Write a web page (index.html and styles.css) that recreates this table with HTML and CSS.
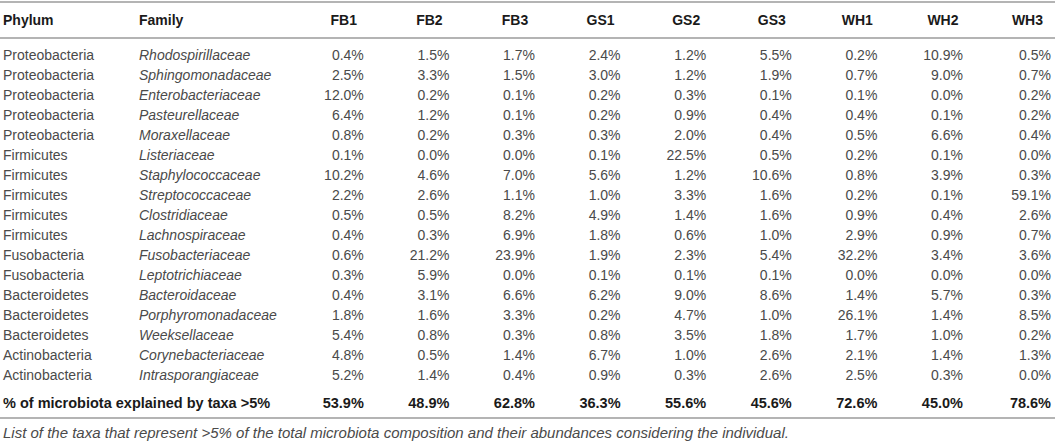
FILE: index.html
```html
<!DOCTYPE html>
<html lang="en">
<head>
    <meta charset="UTF-8">
    <meta name="viewport" content="width=device-width, initial-scale=1.0">
    <title>Taxa abundance</title>
    <link rel="stylesheet" href="styles.css">
</head>
<body>
    <table class="taxa">
        <colgroup>
            <col class="col-phylum">
            <col class="col-family">
            <col class="col-num"><col class="col-num"><col class="col-num">
            <col class="col-num"><col class="col-num"><col class="col-num">
            <col class="col-num"><col class="col-num">
            <col class="col-last">
        </colgroup>
        <thead>
            <tr>
                <th class="text">Phylum</th>
                <th class="text">Family</th>
                <th>FB1</th><th>FB2</th><th>FB3</th>
                <th>GS1</th><th>GS2</th><th>GS3</th>
                <th>WH1</th><th>WH2</th><th class="last">WH3</th>
            </tr>
        </thead>
        <tbody>
            <tr><td class="text">Proteobacteria</td><td class="text fam">Rhodospirillaceae</td><td>0.4%</td><td>1.5%</td><td>1.7%</td><td>2.4%</td><td>1.2%</td><td>5.5%</td><td>0.2%</td><td>10.9%</td><td class="last">0.5%</td></tr>
            <tr><td class="text">Proteobacteria</td><td class="text fam">Sphingomonadaceae</td><td>2.5%</td><td>3.3%</td><td>1.5%</td><td>3.0%</td><td>1.2%</td><td>1.9%</td><td>0.7%</td><td>9.0%</td><td class="last">0.7%</td></tr>
            <tr><td class="text">Proteobacteria</td><td class="text fam">Enterobacteriaceae</td><td>12.0%</td><td>0.2%</td><td>0.1%</td><td>0.2%</td><td>0.3%</td><td>0.1%</td><td>0.1%</td><td>0.0%</td><td class="last">0.2%</td></tr>
            <tr><td class="text">Proteobacteria</td><td class="text fam">Pasteurellaceae</td><td>6.4%</td><td>1.2%</td><td>0.1%</td><td>0.2%</td><td>0.9%</td><td>0.4%</td><td>0.4%</td><td>0.1%</td><td class="last">0.2%</td></tr>
            <tr><td class="text">Proteobacteria</td><td class="text fam">Moraxellaceae</td><td>0.8%</td><td>0.2%</td><td>0.3%</td><td>0.3%</td><td>2.0%</td><td>0.4%</td><td>0.5%</td><td>6.6%</td><td class="last">0.4%</td></tr>
            <tr><td class="text">Firmicutes</td><td class="text fam">Listeriaceae</td><td>0.1%</td><td>0.0%</td><td>0.0%</td><td>0.1%</td><td>22.5%</td><td>0.5%</td><td>0.2%</td><td>0.1%</td><td class="last">0.0%</td></tr>
            <tr><td class="text">Firmicutes</td><td class="text fam">Staphylococcaceae</td><td>10.2%</td><td>4.6%</td><td>7.0%</td><td>5.6%</td><td>1.2%</td><td>10.6%</td><td>0.8%</td><td>3.9%</td><td class="last">0.3%</td></tr>
            <tr><td class="text">Firmicutes</td><td class="text fam">Streptococcaceae</td><td>2.2%</td><td>2.6%</td><td>1.1%</td><td>1.0%</td><td>3.3%</td><td>1.6%</td><td>0.2%</td><td>0.1%</td><td class="last">59.1%</td></tr>
            <tr><td class="text">Firmicutes</td><td class="text fam">Clostridiaceae</td><td>0.5%</td><td>0.5%</td><td>8.2%</td><td>4.9%</td><td>1.4%</td><td>1.6%</td><td>0.9%</td><td>0.4%</td><td class="last">2.6%</td></tr>
            <tr><td class="text">Firmicutes</td><td class="text fam">Lachnospiraceae</td><td>0.4%</td><td>0.3%</td><td>6.9%</td><td>1.8%</td><td>0.6%</td><td>1.0%</td><td>2.9%</td><td>0.9%</td><td class="last">0.7%</td></tr>
            <tr><td class="text">Fusobacteria</td><td class="text fam">Fusobacteriaceae</td><td>0.6%</td><td>21.2%</td><td>23.9%</td><td>1.9%</td><td>2.3%</td><td>5.4%</td><td>32.2%</td><td>3.4%</td><td class="last">3.6%</td></tr>
            <tr><td class="text">Fusobacteria</td><td class="text fam">Leptotrichiaceae</td><td>0.3%</td><td>5.9%</td><td>0.0%</td><td>0.1%</td><td>0.1%</td><td>0.1%</td><td>0.0%</td><td>0.0%</td><td class="last">0.0%</td></tr>
            <tr><td class="text">Bacteroidetes</td><td class="text fam">Bacteroidaceae</td><td>0.4%</td><td>3.1%</td><td>6.6%</td><td>6.2%</td><td>9.0%</td><td>8.6%</td><td>1.4%</td><td>5.7%</td><td class="last">0.3%</td></tr>
            <tr><td class="text">Bacteroidetes</td><td class="text fam">Porphyromonadaceae</td><td>1.8%</td><td>1.6%</td><td>3.3%</td><td>0.2%</td><td>4.7%</td><td>1.0%</td><td>26.1%</td><td>1.4%</td><td class="last">8.5%</td></tr>
            <tr><td class="text">Bacteroidetes</td><td class="text fam">Weeksellaceae</td><td>5.4%</td><td>0.8%</td><td>0.3%</td><td>0.8%</td><td>3.5%</td><td>1.8%</td><td>1.7%</td><td>1.0%</td><td class="last">0.2%</td></tr>
            <tr><td class="text">Actinobacteria</td><td class="text fam">Corynebacteriaceae</td><td>4.8%</td><td>0.5%</td><td>1.4%</td><td>6.7%</td><td>1.0%</td><td>2.6%</td><td>2.1%</td><td>1.4%</td><td class="last">1.3%</td></tr>
            <tr><td class="text">Actinobacteria</td><td class="text fam">Intrasporangiaceae</td><td>5.2%</td><td>1.4%</td><td>0.4%</td><td>0.9%</td><td>0.3%</td><td>2.6%</td><td>2.5%</td><td>0.3%</td><td class="last">0.0%</td></tr>
        </tbody>
        <tfoot>
            <tr>
                <td class="text" colspan="2">% of microbiota explained by taxa &gt;5%</td>
                <td>53.9%</td><td>48.9%</td><td>62.8%</td><td>36.3%</td><td>55.6%</td><td>45.6%</td><td>72.6%</td><td>45.0%</td><td class="last">78.6%</td>
            </tr>
        </tfoot>
    </table>
    <p class="caption">List of the taxa that represent &gt;5% of the total microbiota composition and their abundances considering the individual.</p>
</body>
</html>
```

FILE: styles.css
```css
body {
    margin: 0;
    background: #fff;
    color: #4a4a4a;
    font-family: "Liberation Sans", Arial, sans-serif;
    font-size: 14px;
}
.taxa {
    width: 1055px;
    margin-top: 1px;
    border-collapse: collapse;
    table-layout: fixed;
}
.col-phylum { width: 136px; }
.col-family { width: 165px; }
.col-num { width: 85.6px; }
.col-last { width: 69.2px; }
th, td {
    padding: 0;
    line-height: 20px;
    white-space: nowrap;
}
th {
    padding: 7px 0 7px;
    text-align: center;
    font-weight: bold;
    color: #1a1a1a;
    border-top: 2px solid #b4b4b4;
    border-bottom: 2px solid #b4b4b4;
}
td {
    text-align: right;
    padding-right: 22.8px;
}
th.text, td.text {
    text-align: left;
    padding-left: 3px;
    padding-right: 0;
}
th.last {
    text-align: right;
    padding-right: 12px;
}
td.last {
    padding-right: 4px;
}
.fam {
    font-style: italic;
}
tbody tr:first-child td {
    padding-top: 6px;
}
tfoot td {
    padding-top: 8px;
    padding-bottom: 4px;
    font-size: 14.5px;
    font-weight: bold;
    color: #1a1a1a;
    border-bottom: 2px solid #b4b4b4;
}
.caption {
    margin: 5px 0 0 3px;
    font-size: 15px;
    line-height: 18px;
    font-style: italic;
    color: #4a4a4a;
}
```
